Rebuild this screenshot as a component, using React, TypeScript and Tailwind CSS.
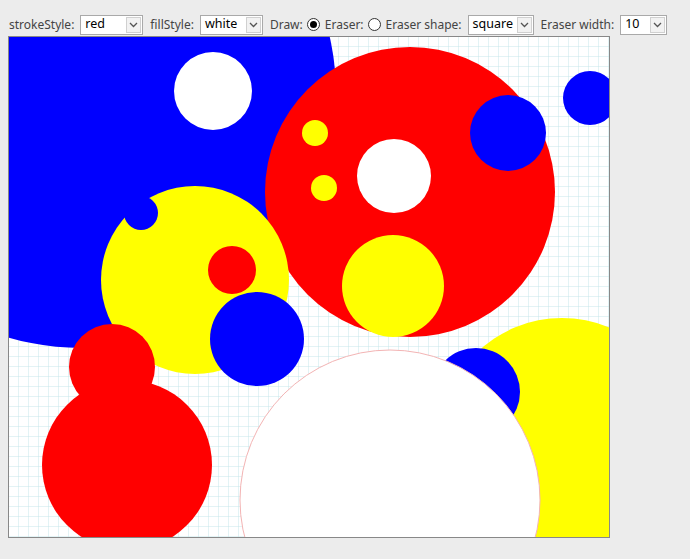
import React from "react";

type Circle = { x: number; y: number; r: number; fill: string; stroke?: string };

// canvas coordinates (600 x 500), drawn in order
const circles: Circle[] = [
  { x: 72, y: 56, r: 255, fill: "#0000ff" },
  { x: 204, y: 54, r: 39, fill: "#ffffff" },
  { x: 401, y: 155, r: 145, fill: "#ff0000" },
  { x: 499, y: 96, r: 38, fill: "#0000ff" },
  { x: 581, y: 61, r: 27, fill: "#0000ff" },
  { x: 306, y: 96, r: 13, fill: "#ffff00" },
  { x: 315, y: 151, r: 13, fill: "#ffff00" },
  { x: 385, y: 139, r: 37, fill: "#ffffff" },
  { x: 384, y: 249, r: 51, fill: "#ffff00" },
  { x: 186, y: 243, r: 94, fill: "#ffff00" },
  { x: 132, y: 176, r: 17, fill: "#0000ff" },
  { x: 223, y: 233, r: 24, fill: "#ff0000" },
  { x: 248, y: 302, r: 47, fill: "#0000ff" },
  { x: 103, y: 330, r: 43, fill: "#ff0000" },
  { x: 118, y: 428, r: 85, fill: "#ff0000" },
  { x: 553, y: 403, r: 122, fill: "#ffff00" },
  { x: 467, y: 355, r: 44, fill: "#0000ff" },
  { x: 381, y: 463, r: 150, fill: "#ffffff", stroke: "#f3b4b4" },
];

function Select({ value, width }: { value: string; width: string }) {
  return (
    <div
      className={`${width} h-[20px] flex items-stretch bg-white border border-[#a9a9a9] text-[12.5px] leading-none text-black`}
    >
      <span className="flex-1 flex items-center pl-[4px] overflow-hidden">{value}</span>
      <span className="w-[15px] m-[1px] flex items-center justify-center bg-[#f2f2f2] border border-[#d0d0d0]">
        <svg width="9" height="6" viewBox="0 0 9 6">
          <path d="M1 1 L4.5 4.5 L8 1" fill="none" stroke="#555" strokeWidth="1.3" />
        </svg>
      </span>
    </div>
  );
}

function Radio({ checked }: { checked?: boolean }) {
  return (
    <span className="w-[13px] h-[13px] rounded-full border border-[#333] bg-white flex items-center justify-center ml-[4px] mr-[5px]">
      {checked && <span className="w-[7px] h-[7px] rounded-full bg-black" />}
    </span>
  );
}

export default function App() {
  return (
    <div className="w-[690px] h-[559px] bg-[#ececec] p-[8px] font-['Noto_Sans',sans-serif] text-[12px] text-[#444]">
      {/* Toolbar */}
      <div className="h-[28px] flex items-center pt-[5px] whitespace-nowrap">
        <span className="ml-[1px]">strokeStyle:</span>
        <div className="ml-[6px]">
          <Select value="red" width="w-[63px]" />
        </div>
        <span className="ml-[7px]">fillStyle:</span>
        <div className="ml-[6px]">
          <Select value="white" width="w-[63px]" />
        </div>
        <span className="ml-[7px]">Draw:</span>
        <Radio checked />
        <span>Eraser:</span>
        <Radio />
        <span>Eraser shape:</span>
        <div className="ml-[6px]">
          <Select value="square" width="w-[66px]" />
        </div>
        <span className="ml-[7px]">Eraser width:</span>
        <div className="ml-[6px]">
          <Select value="10" width="w-[47px]" />
        </div>
      </div>

      {/* Canvas */}
      <div className="w-[602px] h-[502px] border border-[#888] bg-white">
        <svg width="600" height="500" viewBox="0 0 600 500" className="block">
          <defs>
            <pattern id="grid" width="10" height="10" patternUnits="userSpaceOnUse">
              <path d="M10 0 V10 M0 10 H10" fill="none" stroke="#c6e6ea" strokeWidth="1" />
            </pattern>
            <clipPath id="clip">
              <rect width="600" height="500" />
            </clipPath>
          </defs>
          <rect width="600" height="500" fill="url(#grid)" />
          <g clipPath="url(#clip)">
            {circles.map((c, i) => (
              <circle
                key={i}
                cx={c.x}
                cy={c.y}
                r={c.r}
                fill={c.fill}
                stroke={c.stroke ?? "none"}
                strokeWidth={c.stroke ? 1 : 0}
              />
            ))}
          </g>
        </svg>
      </div>
    </div>
  );
}
